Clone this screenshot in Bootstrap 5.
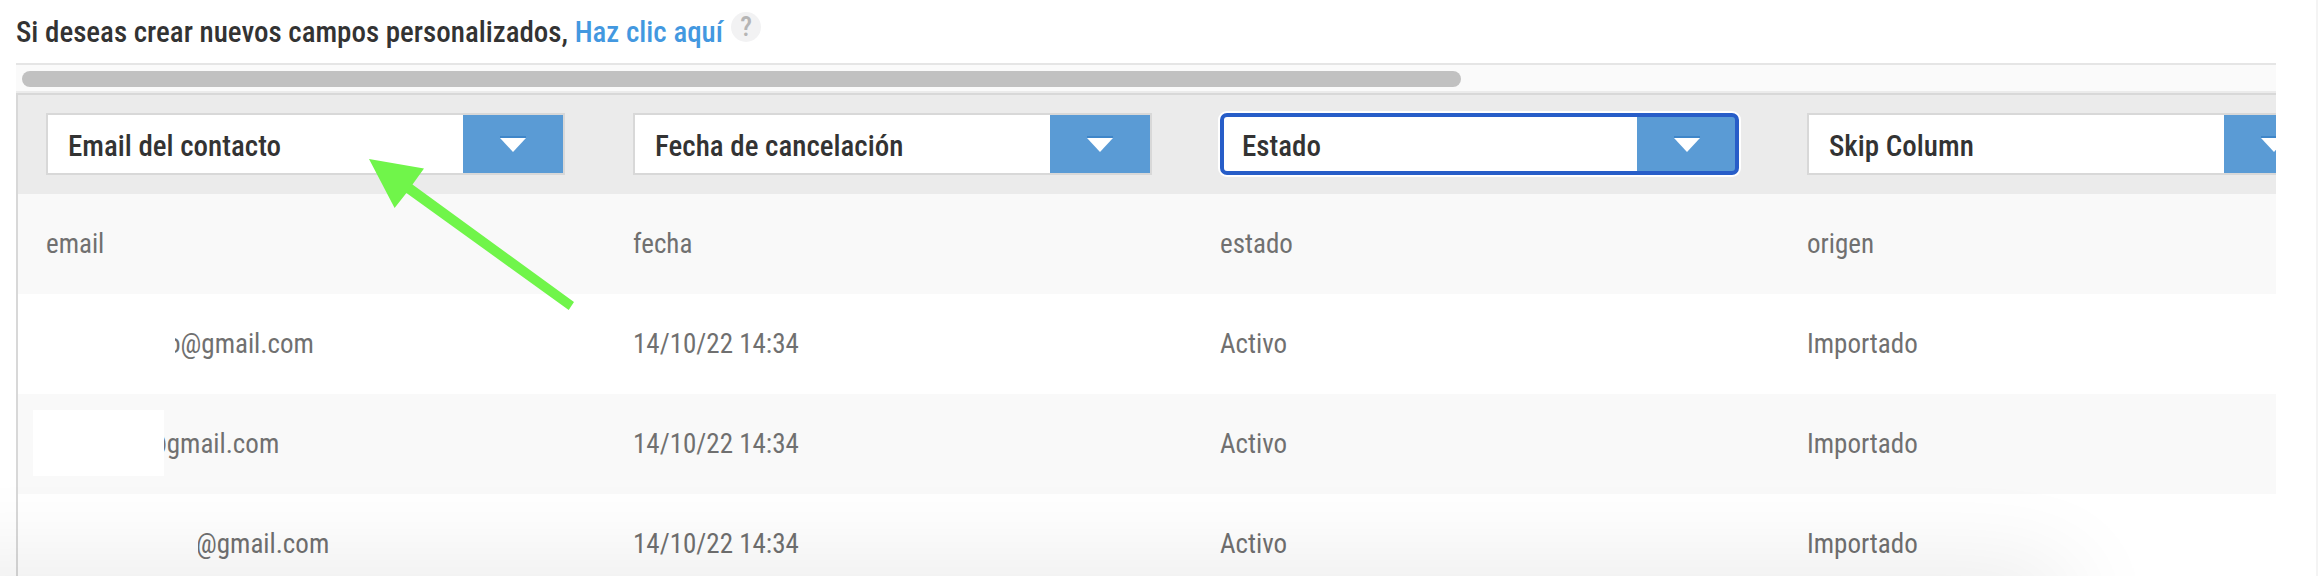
<!DOCTYPE html>
<html lang="es">
<head>
<meta charset="utf-8">
<meta name="viewport" content="width=device-width, initial-scale=1">
<title>Importar contactos</title>
<link href="https://cdn.jsdelivr.net/npm/bootstrap@5.3.0/dist/css/bootstrap.min.css" rel="stylesheet">
<style>
  body { font-family: "Roboto Condensed", "Liberation Sans Narrow", Roboto, sans-serif; font-size: 27px; font-weight: 400; line-height: 40px; color: #333; background: #fff; }
  .page { height: 100vh; padding: 0 40px 0 16px; border-right: 2px solid #f4f4f4; }
  .intro { height: 63px; font-size: 29px; font-weight: 500; }
  .intro p { padding-top: 12px; line-height: 40px; }
  .intro a { color: #4398e0; }
  .help { width: 30px; height: 30px; margin: 12px 0 0 8px; background: #f2f2f3; color: #b5b5b5; font-size: 27px; font-weight: 500; line-height: 30px; }
  .help:hover { color: #888; }
  .scroll-track { height: 30px; padding: 6px; background: #fafafa; border-top: 2px solid #e5e5e5; border-bottom: 2px solid #ebebeb; }
  .scroll-thumb { width: 64%; height: 16px; background: #c1c1c1; }
  .grid-wrap { border-left: 2px solid #d8d8d8; border-top: 2px solid #d8d8d8; }
  .mapping { width: 2348px; table-layout: fixed; border-collapse: collapse; }
  .mapping th { height: 99px; padding: 18px 40px 19px 28px; background: #ebebeb; vertical-align: top; }
  .mapping td { height: 100px; padding: 0 40px 0 28px; color: #707070; vertical-align: middle; position: relative; }
  .mapping tbody tr:nth-child(odd) { background: #f9f9f9; }
  .field-select {
    appearance: none; display: block; width: 100%; height: 62px; padding: 3px 110px 0 20px;
    border: 2px solid #d8d8d8; border-radius: 0; color: #333; font-size: 29px; font-weight: 500; outline: 0;
    background:
      url("data:image/svg+xml,%3Csvg xmlns='http://www.w3.org/2000/svg' width='100' height='58' viewBox='0 0 100 58'%3E%3Cpath d='M37 22h26' stroke='%233f86c9' stroke-width='2'/%3E%3Cpath d='M37 23h26L50 37z' fill='%23fff'/%3E%3C/svg%3E") right center / 100px 58px no-repeat,
      linear-gradient(#5a9bd5, #5a9bd5) right center / 100px 100% no-repeat #fff;
  }
  .field-select.is-active { border-color: #fff; border-radius: 7px; outline: 4px solid #275dc8; outline-offset: -4px; box-shadow: 0 0 0 2px #fff; }
  .hidden-part { display: inline-block; }
  .cover { position: absolute; background: #fff; }
  .pointer { position: absolute; left: 368px; top: 158px; }
  .bottom-shade { position: absolute; left: -100px; right: 250px; top: 100%; height: 60px; box-shadow: 0 0 100px rgba(0,0,0,.12); pointer-events: none; }
</style>
<script src="https://cdn.jsdelivr.net/npm/bootstrap@5.3.0/dist/js/bootstrap.bundle.min.js"></script>
</head>
<body>
<main class="page position-relative overflow-hidden">
  <div class="intro d-flex align-items-start">
    <p class="m-0">Si deseas crear nuevos campos personalizados, <a href="#" class="text-decoration-none">Haz clic aquí</a></p>
    <button type="button" class="help btn p-0 border-0 rounded-circle" aria-label="Ayuda">?</button>
  </div>
  <div class="scroll-track"><div class="scroll-thumb rounded-pill"></div></div>
  <div class="grid-wrap overflow-hidden">
    <table class="mapping">
      <thead>
        <tr>
          <th><select class="field-select" aria-label="Columna email"><option>Email del contacto</option></select></th>
          <th><select class="field-select" aria-label="Columna fecha"><option>Fecha de cancelación</option></select></th>
          <th><select class="field-select is-active" aria-label="Columna estado"><option>Estado</option></select></th>
          <th><select class="field-select" aria-label="Columna origen"><option>Skip Column</option></select></th>
        </tr>
      </thead>
      <tbody>
        <tr><td>email</td><td>fecha</td><td>estado</td><td>origen</td></tr>
        <tr><td><span class="hidden-part" style="width:121px"></span>o@gmail.com<span class="cover" style="left:24px;width:133px;top:20px;height:60px"></span></td><td>14/10/22 14:34</td><td>Activo</td><td>Importado</td></tr>
        <tr><td><span class="hidden-part" style="width:100px"></span>@gmail.com<span class="cover" style="left:15px;width:131px;top:16px;height:66px"></span></td><td>14/10/22 14:34</td><td>Activo</td><td>Importado</td></tr>
        <tr><td><span class="hidden-part" style="width:150px"></span>@gmail.com<span class="cover" style="left:25px;width:155px;top:20px;height:47px"></span></td><td>14/10/22 14:34</td><td>Activo</td><td>Importado</td></tr>
      </tbody>
    </table>
  </div>
  <svg class="pointer" width="208" height="154" viewBox="368 158 208 154" aria-hidden="true"><path d="M369 159L424 168.500L412.500 184.500L574 302L568.700 310L406.400 193L394.600 208Z" fill="#70f54a"/></svg>
  <div class="bottom-shade"></div>
</main>
</body>
</html>
